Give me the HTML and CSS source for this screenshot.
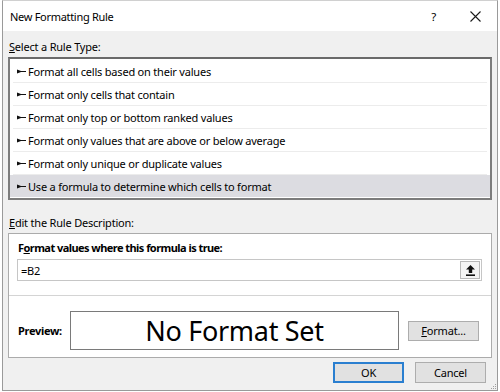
FILE: index.html
```html
<!DOCTYPE html>
<html>
<head>
<meta charset="utf-8">
<link rel="stylesheet" href="styles.css">
</head>
<body>
<div class="dialog">
  <div class="titlebar">
    <span class="title">New Formatting Rule</span>
    <span class="help">?</span>
    <svg class="close" width="11" height="11" viewBox="0 0 11 11"><path d="M0.5 0.5 L10.5 10.5 M10.5 0.5 L0.5 10.5" stroke="#1a1a1a" stroke-width="1.1" fill="none"/></svg>
  </div>
  <div class="body">
    <div class="label"><u>S</u>elect a Rule Type:</div>
    <div class="listbox">
      <div class="row"><svg class="arr" width="9" height="5" viewBox="0 0 9 5"><path d="M0 0.4 L4 1.9 L9 1.9 L9 3.1 L4 3.1 L0 4.6 Z" fill="#111"/></svg><span>Format all cells based on their values</span></div>
      <div class="row"><svg class="arr" width="9" height="5" viewBox="0 0 9 5"><path d="M0 0.4 L4 1.9 L9 1.9 L9 3.1 L4 3.1 L0 4.6 Z" fill="#111"/></svg><span>Format only cells that contain</span></div>
      <div class="row"><svg class="arr" width="9" height="5" viewBox="0 0 9 5"><path d="M0 0.4 L4 1.9 L9 1.9 L9 3.1 L4 3.1 L0 4.6 Z" fill="#111"/></svg><span>Format only top or bottom ranked values</span></div>
      <div class="row"><svg class="arr" width="9" height="5" viewBox="0 0 9 5"><path d="M0 0.4 L4 1.9 L9 1.9 L9 3.1 L4 3.1 L0 4.6 Z" fill="#111"/></svg><span>Format only values that are above or below average</span></div>
      <div class="row"><svg class="arr" width="9" height="5" viewBox="0 0 9 5"><path d="M0 0.4 L4 1.9 L9 1.9 L9 3.1 L4 3.1 L0 4.6 Z" fill="#111"/></svg><span>Format only unique or duplicate values</span></div>
      <div class="row selected"><svg class="arr" width="9" height="5" viewBox="0 0 9 5"><path d="M0 0.4 L4 1.9 L9 1.9 L9 3.1 L4 3.1 L0 4.6 Z" fill="#111"/></svg><span>Use a formula to determine which cells to format</span></div>
    </div>
    <div class="label label2"><u>E</u>dit the Rule Description:</div>
    <div class="descbox">
      <div class="formula-label">F<u>o</u>rmat values where this formula is true:</div>
      <div class="input">
        <span class="value">=B2</span>
        <span class="refbtn"><svg width="9" height="11" viewBox="0 0 9 11"><path d="M4.5 0 L9 4.5 L6.2 4.5 L6.2 8 L2.8 8 L2.8 4.5 L0 4.5 Z" fill="#111"/><rect x="0" y="9.4" width="9" height="1.6" fill="#111"/></svg></span>
      </div>
      <div class="sep"></div>
      <div class="preview-row">
        <span class="preview-label">Preview:</span>
        <div class="preview">No Format Set</div>
        <span class="btn fmt"><u>F</u>ormat...</span>
      </div>
    </div>
    <div class="footer">
      <span class="btn ok">OK</span>
      <span class="btn">Cancel</span>
    </div>
    <svg class="grip" width="7" height="7" viewBox="0 0 7 7"><g fill="#a0a0a0"><rect x="5" y="1" width="1" height="1"/><rect x="3" y="3" width="1" height="1"/><rect x="5" y="3" width="1" height="1"/><rect x="1" y="5" width="1" height="1"/><rect x="3" y="5" width="1" height="1"/><rect x="5" y="5" width="1" height="1"/></g></svg>
  </div>
</div>
</body>
</html>
```

FILE: styles.css
```css
* { box-sizing: border-box; }
html, body {
  margin: 0;
  padding: 0;
  background: #ffffff;
}
body {
  font-family: "Noto Sans", "Open Sans", sans-serif;
  font-size: 11px;
  letter-spacing: -0.2px;
  color: #000;
  width: 500px;
  height: 392px;
  overflow: hidden;
}
.dialog {
  margin-left: 2px;
  width: 496px;
  height: 391px;
  border: 1px solid #9a9a9a;
  border-top-color: #d0d0d0;
  display: flex;
  flex-direction: column;
}
.titlebar {
  height: 30px;
  background: #fff;
  display: flex;
  align-items: center;
  padding-left: 7px;
  flex-shrink: 0;
}
.title {
  font-size: 11px;
  letter-spacing: -0.3px;
  flex: 1;
}
.help {
  font-size: 11.5px;
  margin-right: 34px;
}
.close {
  margin-right: 16px;
}
.body {
  flex: 1;
  background: #f0f0f0;
  padding: 0 5px;
  position: relative;
}
.label {
  line-height: 16px;
  margin-top: 8px;
  margin-left: 1px;
  height: 16px;
}
.label2 {
  margin-top: 15px;
}
.listbox {
  margin-top: 2px;
  height: 143px;
  background: #fff;
  border: 2px solid #7c7c7c;
  border-top-color: #6a6a6a;
  padding-top: 1px;
}
.row {
  height: 23px;
  display: flex;
  align-items: center;
  padding-left: 7px;
  background: linear-gradient(#ececec, #ececec) no-repeat 3px 100% / calc(100% - 6px) 1px;
}
.row.selected {
  background: #dcdce1;
  height: 22px;
}
.arr {
  margin-right: 2px;
  flex-shrink: 0;
}
.descbox {
  margin-top: 2px;
  height: 125px;
  background: #fff;
  border: 1px solid #ababab;
}
.formula-label {
  font-weight: bold;
  letter-spacing: -0.55px;
  line-height: 16px;
  margin-top: 6px;
  margin-left: 9px;
}
.input {
  margin: 3px 9px 0 8px;
  height: 22px;
  border: 1px solid #c6c6c6;
  display: flex;
  align-items: center;
  justify-content: space-between;
  padding-left: 3px;
  padding-right: 1px;
}
.value {
  font-size: 11px;
}
.refbtn {
  width: 20px;
  height: 18px;
  border: 1px solid #b8b8b8;
  background: #f4f4f4;
  display: flex;
  align-items: center;
  justify-content: center;
}
.sep {
  margin-top: 14px;
  height: 1px;
  background: #d4d4d4;
}
.preview-row {
  margin-top: 15px;
  display: flex;
  align-items: center;
  padding-left: 9px;
}
.preview-label {
  font-weight: bold;
  letter-spacing: -0.3px;
  width: 52px;
}
.preview {
  width: 329px;
  height: 39px;
  border: 1px solid #7a7a7a;
  display: flex;
  align-items: center;
  justify-content: center;
  font-size: 27px;
  color: #000;
  letter-spacing: -0.3px;
}
.btn {
  width: 71px;
  height: 21px;
  border: 1px solid #adadad;
  background: #e1e1e1;
  display: flex;
  align-items: center;
  justify-content: center;
}
.fmt {
  margin-left: 9px;
  height: 20px;
}
.footer {
  margin-top: 4px;
  display: flex;
  justify-content: flex-end;
  gap: 11px;
  padding-right: 6px;
}
.ok {
  border: 2px solid #2a7fd0;
}
.grip {
  position: absolute;
  right: 0;
  bottom: 0;
}
```
